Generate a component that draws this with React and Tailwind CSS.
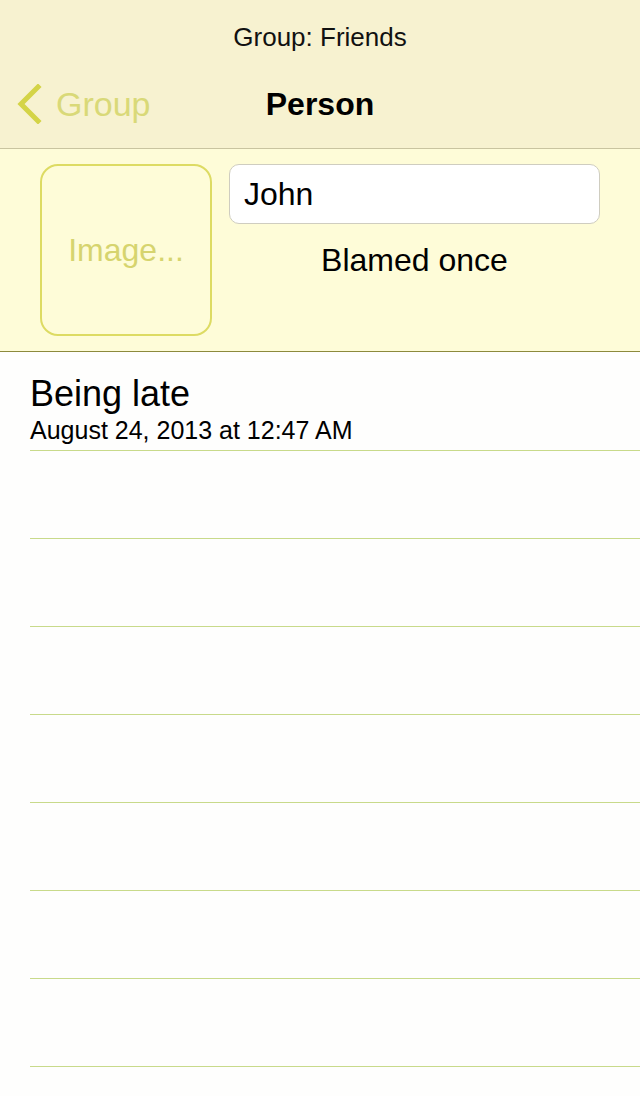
export default function App() {
  const rows = Array.from({ length: 7 });
  return (
    <div className="w-[640px] h-[1096px] overflow-hidden bg-[#fefefd] font-['Liberation_Sans',Arial,sans-serif] text-black">
      <div className="h-[149px] bg-[#f7f2d0] border-b border-[#c9c4a0] flex flex-col">
        <div className="h-[72px] flex items-start justify-center pt-[24px] text-[26px] leading-none text-[#111]">
          Group: Friends
        </div>
        <div className="relative flex-1 flex items-center justify-center pb-[12px]">
          <div className="absolute left-[16px] top-[12px] flex items-center gap-[14px]">
            <svg width="26" height="40" viewBox="0 0 26 40" className="shrink-0">
              <path d="M22 3 L5 20 L22 37" fill="none" stroke="#d4d447" strokeWidth="5" strokeLinecap="square" />
            </svg>
            <span className="text-[34px] leading-none text-[#d9d978]">Group</span>
          </div>
          <span className="text-[32px] font-bold leading-none">Person</span>
        </div>
      </div>
      <div className="h-[203px] bg-[#fefcd8] border-b border-[#8c8a3c] flex pt-[15px] pl-[40px] pr-[40px] gap-[17px]">
        <div className="w-[172px] h-[172px] shrink-0 rounded-[18px] border-2 border-[#dddb63] flex items-center justify-center text-[32px] text-[#d6d46e]">
          Image...
        </div>
        <div className="flex-1 flex flex-col">
          <div className="h-[60px] rounded-[10px] border border-[#cfcdc0] bg-white flex items-center pl-[14px] text-[32px]">
            John
          </div>
          <div className="mt-[20px] text-center text-[32px] leading-none">Blamed once</div>
        </div>
      </div>
      <div className="pl-[30px]">
        <div className="h-[99px] border-b border-[#c8da8a] flex flex-col pt-[24px]">
          <div className="text-[36px] leading-none">Being late</div>
          <div className="mt-[6px] text-[25px] leading-none">August 24, 2013 at 12:47 AM</div>
        </div>
        {rows.map((_, i) => (
          <div key={i} className="h-[88px] border-b border-[#c8da8a]" />
        ))}
      </div>
    </div>
  );
}
